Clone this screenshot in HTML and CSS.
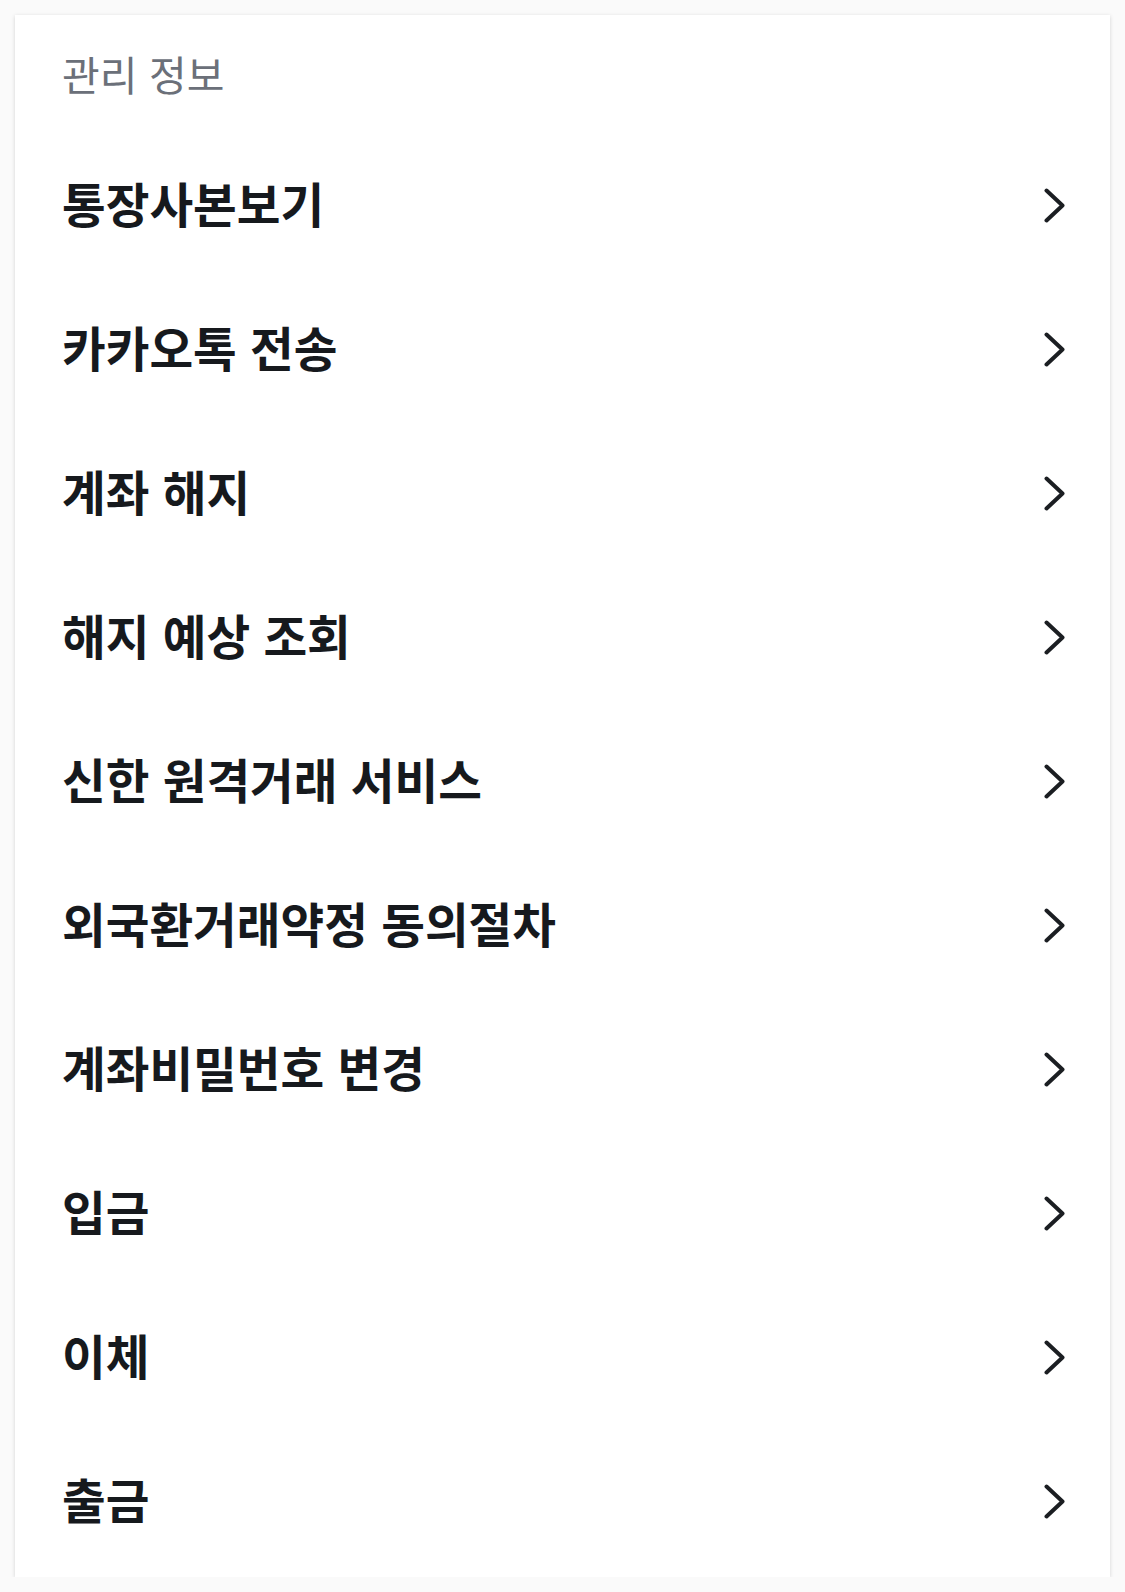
FILE: index.html
```html
<!DOCTYPE html>
<html lang="ko">
<head>
  <meta charset="UTF-8">
  <meta name="viewport" content="width=device-width, initial-scale=1.0">
  <title>관리 정보</title>
  <link rel="stylesheet" href="styles.css">
</head>
<body>

  <!-- Account management menu -->
  <div class="menu-card">
    <div class="menu-title">관리 정보</div>

    <a href="#" class="menu-item">
      <span>통장사본보기</span>
      <svg class="chevron" viewBox="0 0 21 35"><polyline points="2.5,2.5 18.5,17.5 2.5,32.5"/></svg>
    </a>
    <a href="#" class="menu-item">
      <span>카카오톡 전송</span>
      <svg class="chevron" viewBox="0 0 21 35"><polyline points="2.5,2.5 18.5,17.5 2.5,32.5"/></svg>
    </a>
    <a href="#" class="menu-item">
      <span>계좌 해지</span>
      <svg class="chevron" viewBox="0 0 21 35"><polyline points="2.5,2.5 18.5,17.5 2.5,32.5"/></svg>
    </a>
    <a href="#" class="menu-item">
      <span>해지 예상 조회</span>
      <svg class="chevron" viewBox="0 0 21 35"><polyline points="2.5,2.5 18.5,17.5 2.5,32.5"/></svg>
    </a>
    <a href="#" class="menu-item">
      <span>신한 원격거래 서비스</span>
      <svg class="chevron" viewBox="0 0 21 35"><polyline points="2.5,2.5 18.5,17.5 2.5,32.5"/></svg>
    </a>
    <a href="#" class="menu-item">
      <span>외국환거래약정 동의절차</span>
      <svg class="chevron" viewBox="0 0 21 35"><polyline points="2.5,2.5 18.5,17.5 2.5,32.5"/></svg>
    </a>
    <a href="#" class="menu-item">
      <span>계좌비밀번호 변경</span>
      <svg class="chevron" viewBox="0 0 21 35"><polyline points="2.5,2.5 18.5,17.5 2.5,32.5"/></svg>
    </a>
    <a href="#" class="menu-item">
      <span>입금</span>
      <svg class="chevron" viewBox="0 0 21 35"><polyline points="2.5,2.5 18.5,17.5 2.5,32.5"/></svg>
    </a>
    <a href="#" class="menu-item">
      <span>이체</span>
      <svg class="chevron" viewBox="0 0 21 35"><polyline points="2.5,2.5 18.5,17.5 2.5,32.5"/></svg>
    </a>
    <a href="#" class="menu-item">
      <span>출금</span>
      <svg class="chevron" viewBox="0 0 21 35"><polyline points="2.5,2.5 18.5,17.5 2.5,32.5"/></svg>
    </a>
  </div>

</body>
</html>
```

FILE: styles.css
```css
/* Reset */
* {
  margin: 0;
  padding: 0;
  box-sizing: border-box;
  font-family: "Noto Sans CJK KR", "Noto Sans", sans-serif;
}

body {
  background-color: #fafafa;
  padding: 15px 15px 0 15px;
}

/* Card */
.menu-card {
  background-color: #fff;
  box-shadow: 0 1px 4px rgba(0, 0, 0, 0.16);
  padding: 0 45px 4px 47px;
}

.menu-title {
  height: 118px;
  padding-top: 31px;
  font-size: 41px;
  line-height: 54px;
  color: #6b7079;
}

/* Menu rows */
.menu-item {
  display: flex;
  justify-content: space-between;
  align-items: center;
  height: 144px;
  text-decoration: none;
  color: #16191d;
  font-size: 47.5px;
  font-weight: 600;
}
.menu-item span {
  margin-bottom: 6px;
}

.chevron {
  width: 21px;
  height: 35px;
  fill: none;
  stroke: #1b1e22;
  stroke-width: 4;
  stroke-linecap: round;
  stroke-linejoin: round;
}
```
